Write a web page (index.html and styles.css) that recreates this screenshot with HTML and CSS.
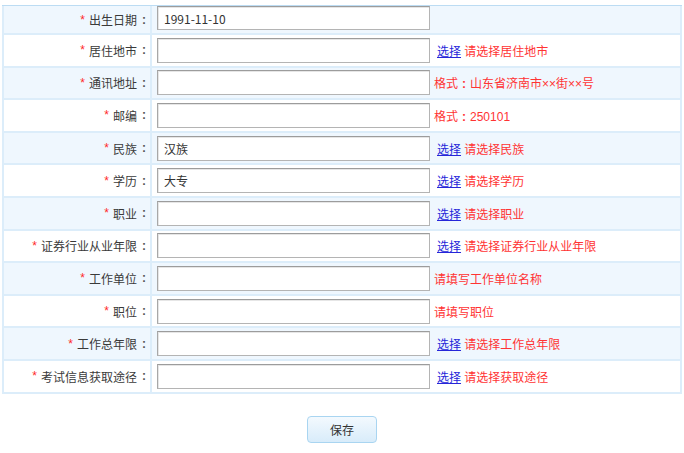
FILE: index.html
```html
<!DOCTYPE html>
<html lang="zh-CN">
<head>
<meta charset="utf-8">
<title>基本信息</title>
<link rel="stylesheet" href="styles.css">
</head>
<body>
<div class="form">
  <div class="row alt first">
    <div class="label"><span class="star">*</span>出生日期<span class="colon">:</span></div>
    <div class="field"><input class="inp" type="text" value="1991-11-10"></div>
  </div>
  <div class="row">
    <div class="label"><span class="star">*</span>居住地市<span class="colon">:</span></div>
    <div class="field"><input class="inp" type="text"><span class="hint"><a class="pick" href="#">选择</a> 请选择居住地市</span></div>
  </div>
  <div class="row alt">
    <div class="label"><span class="star">*</span>通讯地址<span class="colon">:</span></div>
    <div class="field"><input class="inp" type="text"><span class="hint tight">格式<span class="fw">:</span>山东省济南市××街××号</span></div>
  </div>
  <div class="row">
    <div class="label"><span class="star">*</span>邮编<span class="colon">:</span></div>
    <div class="field"><input class="inp" type="text"><span class="hint tight">格式<span class="fw">:</span>250101</span></div>
  </div>
  <div class="row alt">
    <div class="label"><span class="star">*</span>民族<span class="colon">:</span></div>
    <div class="field"><input class="inp" type="text" value="汉族"><span class="hint"><a class="pick" href="#">选择</a> 请选择民族</span></div>
  </div>
  <div class="row">
    <div class="label"><span class="star">*</span>学历<span class="colon">:</span></div>
    <div class="field"><input class="inp" type="text" value="大专"><span class="hint"><a class="pick" href="#">选择</a> 请选择学历</span></div>
  </div>
  <div class="row alt">
    <div class="label"><span class="star">*</span>职业<span class="colon">:</span></div>
    <div class="field"><input class="inp" type="text"><span class="hint"><a class="pick" href="#">选择</a> 请选择职业</span></div>
  </div>
  <div class="row">
    <div class="label"><span class="star">*</span>证券行业从业年限<span class="colon">:</span></div>
    <div class="field"><input class="inp" type="text"><span class="hint"><a class="pick" href="#">选择</a> 请选择证券行业从业年限</span></div>
  </div>
  <div class="row alt">
    <div class="label"><span class="star">*</span>工作单位<span class="colon">:</span></div>
    <div class="field"><input class="inp" type="text"><span class="hint tight">请填写工作单位名称</span></div>
  </div>
  <div class="row">
    <div class="label"><span class="star">*</span>职位<span class="colon">:</span></div>
    <div class="field"><input class="inp" type="text"><span class="hint tight">请填写职位</span></div>
  </div>
  <div class="row alt">
    <div class="label"><span class="star">*</span>工作总年限<span class="colon">:</span></div>
    <div class="field"><input class="inp" type="text"><span class="hint"><a class="pick" href="#">选择</a> 请选择工作总年限</span></div>
  </div>
  <div class="row">
    <div class="label"><span class="star">*</span>考试信息获取途径<span class="colon">:</span></div>
    <div class="field"><input class="inp" type="text"><span class="hint"><a class="pick" href="#">选择</a> 请选择获取途径</span></div>
  </div>
</div>
<div class="actions">
  <button class="save" type="button">保存</button>
</div>
</body>
</html>
```

FILE: styles.css
```css
html, body {
  margin: 0;
  padding: 0;
  background: #ffffff;
}
body {
  font-family: "Noto Sans CJK SC", "Liberation Sans", sans-serif;
  font-size: 12px;
  color: #333333;
}
.form {
  margin: 5px 2px 0 2px;
  width: 680px;
  box-sizing: border-box;
  border-top: 1px solid #bcdcf3;
  background: #dcedfa;
  padding: 0 2px 2px 2px;
  display: flex;
  flex-direction: column;
  gap: 2px;
}
.row {
  display: grid;
  grid-template-columns: 146px 1fr;
  column-gap: 2px;
  height: 30.6px;
}
.row.first {
  height: 27px;
}
.label, .field {
  background: #ffffff;
  display: flex;
  align-items: center;
}
.row.alt .label, .row.alt .field {
  background: #eff7fe;
}
.label {
  justify-content: flex-end;
  padding-right: 4px;
  white-space: nowrap;
  color: #3a3a3a;
}
.star {
  color: #ff2a2a;
  margin-right: 4px;
  font-family: "Liberation Sans", sans-serif;
}
.colon {
  margin-left: 5px;
  font-family: "Liberation Sans", sans-serif;
  font-weight: bold;
  color: #555555;
}
.field {
  padding-left: 5px;
}
.row.first .field {
  align-items: flex-start;
}
.inp {
  width: 273px;
  height: 25px;
  box-sizing: border-box;
  margin: 0;
  padding: 0 6px;
  border: 1px solid #b4b4b4;
  border-top-color: #9c9c9c;
  border-left-color: #a8a8a8;
  box-shadow: inset 1px 1px 0 #e6e6e6;
  background: #ffffff;
  font-family: "Noto Sans CJK SC", "Liberation Sans", sans-serif;
  font-size: 12px;
  color: #333333;
  outline: none;
}
.row.first .inp {
  height: 24px;
}
.hint {
  margin-left: 7px;
  color: #ff3333;
  white-space: nowrap;
  font-family: "Liberation Sans", "Noto Sans CJK SC", sans-serif;
}
.hint.tight {
  margin-left: 4px;
}
.fw {
  display: inline-block;
  width: 12px;
  text-align: center;
  font-weight: bold;
}
.pick {
  color: #2626d9;
  text-decoration: underline;
  font-family: "Noto Sans CJK SC", sans-serif;
}
.actions {
  display: flex;
  justify-content: center;
  padding-top: 22px;
}
.save {
  width: 70px;
  height: 27px;
  border: 1px solid #a9d5f1;
  border-radius: 4px;
  background: linear-gradient(#f3f9fe, #d8ecfa);
  font-family: "Noto Sans CJK SC", "Liberation Sans", sans-serif;
  font-size: 12px;
  color: #333333;
  padding: 0;
  cursor: pointer;
}
```
